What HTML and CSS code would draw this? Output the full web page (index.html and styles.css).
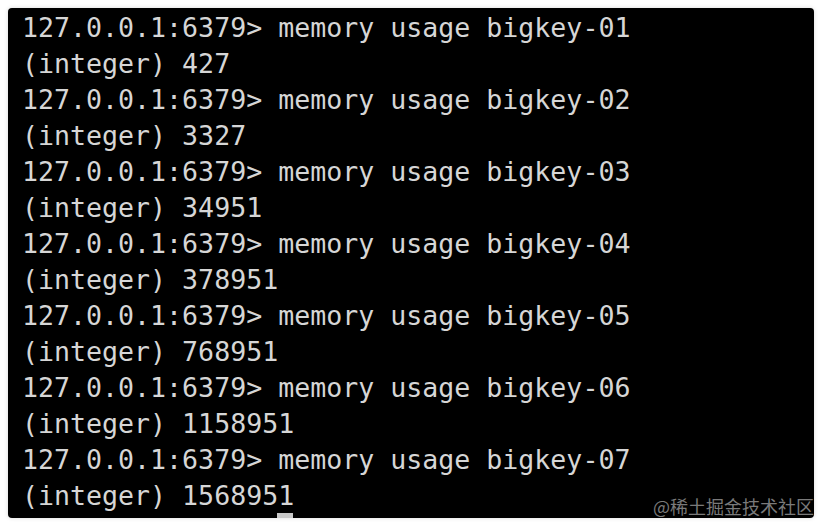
FILE: index.html
```html
<!DOCTYPE html>
<html lang="zh">
<head>
<meta charset="utf-8">
<link rel="stylesheet" href="styles.css">
</head>
<body>
<div class="term">
<pre class="out">127.0.0.1:6379&gt; memory usage bigkey-01
(integer) 427
127.0.0.1:6379&gt; memory usage bigkey-02
(integer) 3327
127.0.0.1:6379&gt; memory usage bigkey-03
(integer) 34951
127.0.0.1:6379&gt; memory usage bigkey-04
(integer) 378951
127.0.0.1:6379&gt; memory usage bigkey-05
(integer) 768951
127.0.0.1:6379&gt; memory usage bigkey-06
(integer) 1158951
127.0.0.1:6379&gt; memory usage bigkey-07
(integer) 1568951</pre>
<span class="cursor"></span>
<span class="mark">@稀土掘金技术社区</span>
</div>
</body>
</html>
```
FILE: styles.css
```css
html, body {
  margin: 0;
  padding: 0;
  background: #ffffff;
}
body {
  padding: 8px;
}
.term {
  position: relative;
  height: 510px;
  background: #000;
  border-radius: 4px;
  overflow: hidden;
  box-shadow: 0 0 4px rgba(0,0,0,0.15);
}
.out {
  margin: 0;
  padding: 2px 0 0 14px;
  font-family: "DejaVu Sans Mono", monospace;
  font-size: 26.6px;
  line-height: 36px;
  color: #d6d6d6;
}
.cursor {
  position: absolute;
  left: 269px;
  top: 505px;
  width: 16px;
  height: 6px;
  background: #c8c8c8;
}
.mark {
  position: absolute;
  right: 0;
  bottom: 1px;
  font-family: "Noto Sans CJK SC", sans-serif;
  font-size: 18px;
  line-height: 22px;
  color: #7a7a7a;
}
```
